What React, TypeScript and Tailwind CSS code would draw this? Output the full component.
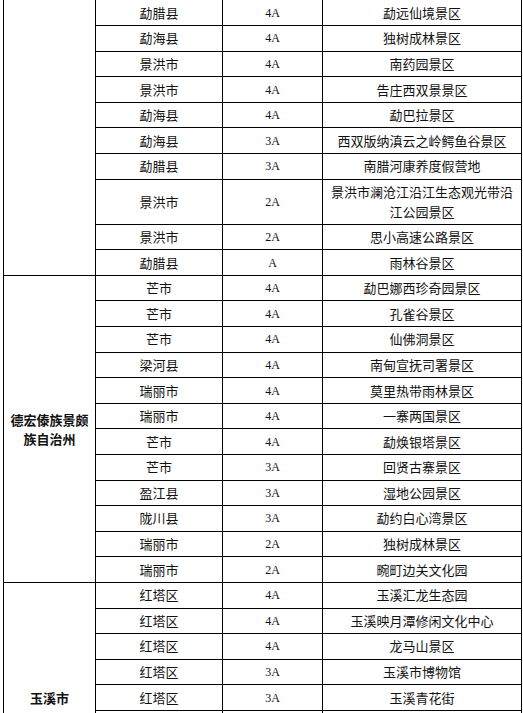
import React from "react";

type Row = { county: string; grade: string; name: string };
type Group = { region: string; rows: Row[] };

const blank: Row = { county: "", grade: "", name: "" };

const groups: Group[] = [
  {
    region: "",
    rows: [
      { county: "勐腊县", grade: "4A", name: "勐远仙境景区" },
      { county: "勐海县", grade: "4A", name: "独树成林景区" },
      { county: "景洪市", grade: "4A", name: "南药园景区" },
      { county: "景洪市", grade: "4A", name: "告庄西双景景区" },
      { county: "勐海县", grade: "4A", name: "勐巴拉景区" },
      { county: "勐海县", grade: "3A", name: "西双版纳滇云之岭鳄鱼谷景区" },
      { county: "勐腊县", grade: "3A", name: "南腊河康养度假营地" },
      { county: "景洪市", grade: "2A", name: "景洪市澜沧江沿江生态观光带沿江公园景区" },
      { county: "景洪市", grade: "2A", name: "思小高速公路景区" },
      { county: "勐腊县", grade: "A", name: "雨林谷景区" },
    ],
  },
  {
    region: "德宏傣族景颇族自治州",
    rows: [
      { county: "芒市", grade: "4A", name: "勐巴娜西珍奇园景区" },
      { county: "芒市", grade: "4A", name: "孔雀谷景区" },
      { county: "芒市", grade: "4A", name: "仙佛洞景区" },
      { county: "梁河县", grade: "4A", name: "南甸宣抚司署景区" },
      { county: "瑞丽市", grade: "4A", name: "莫里热带雨林景区" },
      { county: "瑞丽市", grade: "4A", name: "一寨两国景区" },
      { county: "芒市", grade: "4A", name: "勐焕银塔景区" },
      { county: "芒市", grade: "3A", name: "回贤古寨景区" },
      { county: "盈江县", grade: "3A", name: "湿地公园景区" },
      { county: "陇川县", grade: "3A", name: "勐约白心湾景区" },
      { county: "瑞丽市", grade: "2A", name: "独树成林景区" },
      { county: "瑞丽市", grade: "2A", name: "畹町边关文化园" },
    ],
  },
  {
    region: "玉溪市",
    rows: [
      { county: "红塔区", grade: "4A", name: "玉溪汇龙生态园" },
      { county: "红塔区", grade: "4A", name: "玉溪映月潭修闲文化中心" },
      { county: "红塔区", grade: "4A", name: "龙马山景区" },
      { county: "红塔区", grade: "3A", name: "玉溪市博物馆" },
      { county: "红塔区", grade: "3A", name: "玉溪青花街" },
      blank,
      blank,
      blank,
      blank,
    ],
  },
];

const cell = "border border-black text-center align-middle h-[25.6px] py-[2px] leading-[20px]";

export default function App() {
  return (
    <div
      className="h-[713px] overflow-hidden bg-white pl-[3px] text-[13px] text-[#111]"
      style={{ fontFamily: '"Noto Sans CJK SC", sans-serif' }}
    >
      <table className="w-[518px] table-fixed border-collapse">
        <colgroup>
          <col className="w-[92px]" />
          <col className="w-[127px]" />
          <col className="w-[100px]" />
          <col className="w-[199px]" />
        </colgroup>
        <tbody>
          {groups.map((g, gi) =>
            g.rows.map((r, i) => {
              const top = gi === 0 && i === 0 ? " border-t-0" : "";
              return (
                <tr key={gi + "-" + i}>
                  {i === 0 && (
                    <td
                      rowSpan={g.rows.length}
                      className={
                        "border border-black px-1 text-center align-middle text-[13px] font-bold leading-[19px]" +
                        top
                      }
                    >
                      {g.region}
                    </td>
                  )}
                  <td className={cell + top}>{r.county}</td>
                  <td className={cell + top + " font-['Liberation_Serif',serif] text-[12px]"}>{r.grade}</td>
                  <td className={cell + top + " px-[7px]"}>{r.name}</td>
                </tr>
              );
            })
          )}
        </tbody>
      </table>
    </div>
  );
}
